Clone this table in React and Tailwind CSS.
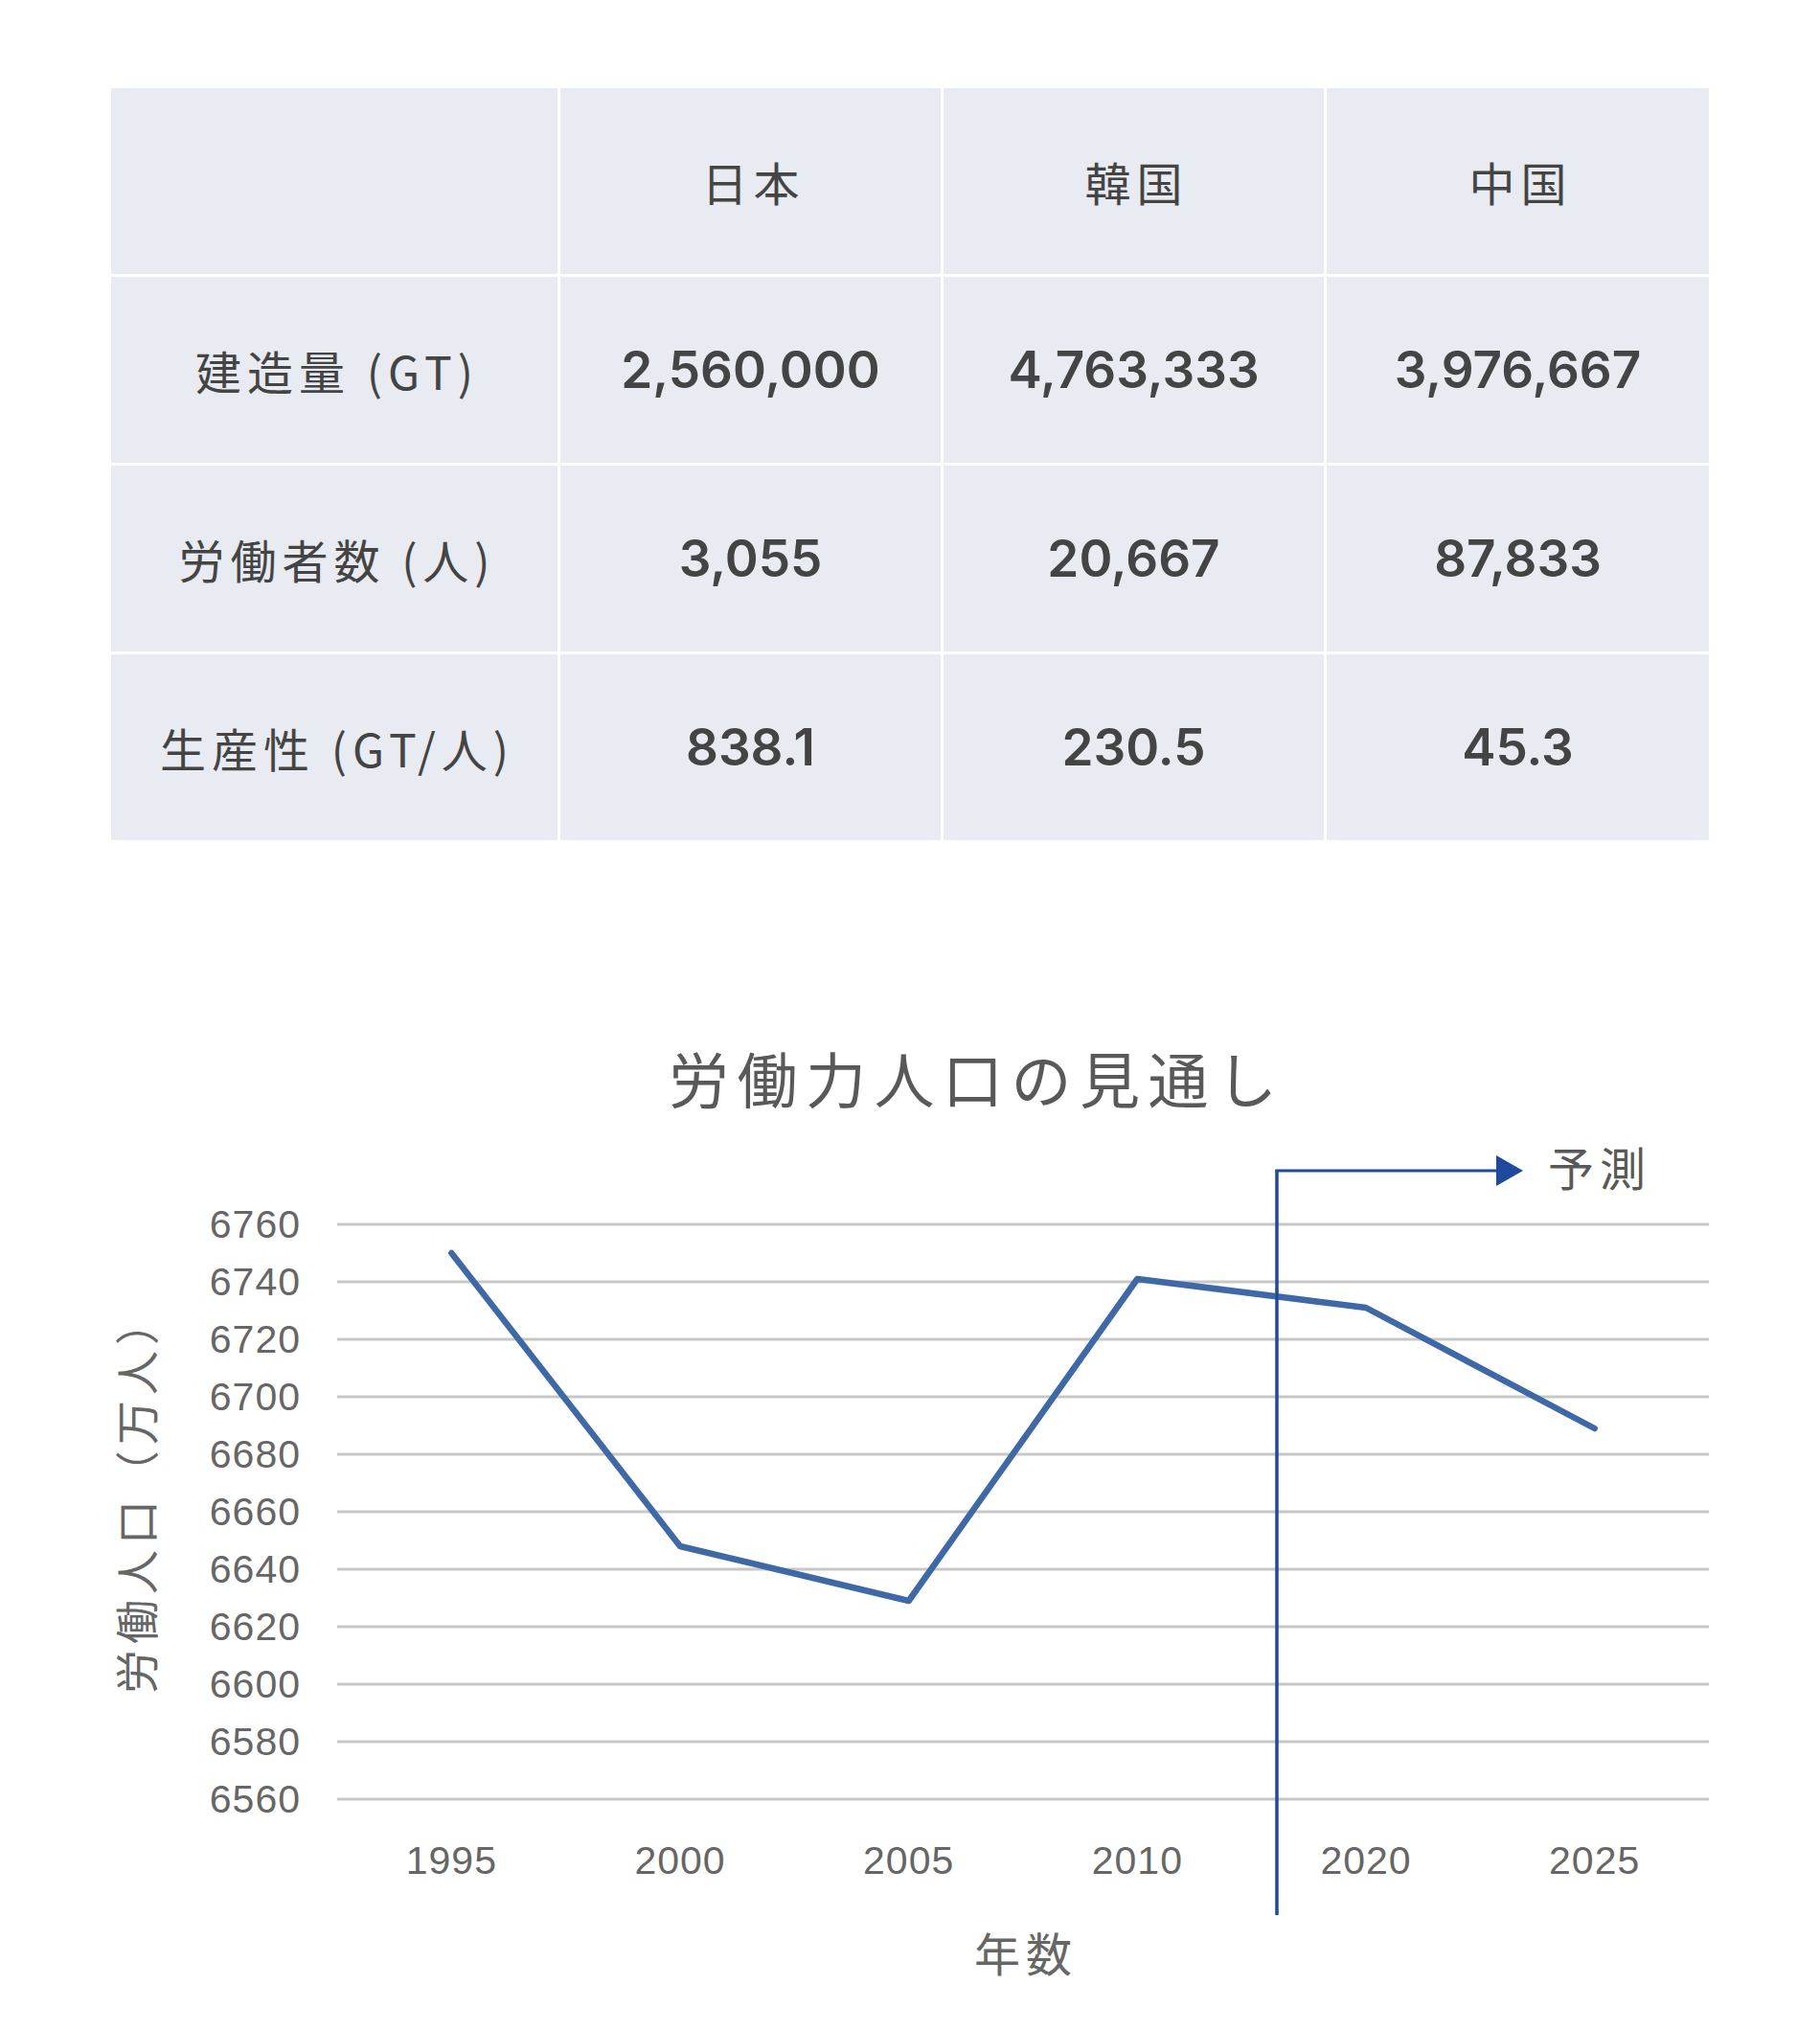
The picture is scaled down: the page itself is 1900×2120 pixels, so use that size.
import React from 'react';

const COLS = ['日本', '韓国', '中国'];

const ROWS = [
  ['建造量 (GT)', ['2,560,000', '4,763,333', '3,976,667']],
  ['労働者数 (人)', ['3,055', '20,667', '87,833']],
  ['生産性 (GT/人)', ['838.1', '230.5', '45.3']],
];

const YEARS = ['1995', '2000', '2005', '2010', '2020', '2025'];
const VALUES = [6750, 6648, 6629, 6741, 6731, 6689];
const TICKS = [6760, 6740, 6720, 6700, 6680, 6660, 6640, 6620, 6600, 6580, 6560];

// plot geometry (svg spans the page width, top of svg = page y 1180)
const X0 = 352;
const X1 = 1784;
const STEP = (X1 - X0) / YEARS.length;
const yOf = (v) => 97 + (6760 - v) * 3;
const xOf = (i) => X0 + STEP * (i + 0.5);

const cell = 'flex h-[194px] items-center justify-center bg-[#e8ebf2]';
const jp = "font-['Noto_Sans_CJK_JP',sans-serif]";

const Chart = () => {
  const points = VALUES.map((v, i) => `${xOf(i)},${yOf(v)}`).join(' ');
  return (
    <svg width="1900" height="822" viewBox="0 0 1900 822" className="block">
      {TICKS.map((t, i) => (
        <g key={t}>
          <line x1={X0} x2={X1} y1={97 + i * 60} y2={97 + i * 60} stroke="#c8c8c8" strokeWidth="3" />
          <text
            x="314"
            y={97 + i * 60}
            textAnchor="end"
            dominantBaseline="central"
            fill="#666"
            fontSize="41"
            letterSpacing="1"
            fontFamily="'Liberation Sans', Arial, sans-serif"
          >
            {t}
          </text>
        </g>
      ))}
      {YEARS.map((y, i) => (
        <text
          key={y}
          x={xOf(i)}
          y="775"
          textAnchor="middle"
          fill="#666"
          fontSize="41"
          letterSpacing="1"
          fontFamily="'Liberation Sans', Arial, sans-serif"
        >
          {y}
        </text>
      ))}

      <polyline points={points} fill="none" stroke="#3e69a6" strokeWidth="6.5" strokeLinejoin="round" strokeLinecap="round" />

      {/* forecast marker */}
      <line x1="1333" x2="1333" y1="40" y2="818" stroke="#1f4a9c" strokeWidth="3.5" />
      <line x1="1331.5" x2="1564" y1="41" y2="41" stroke="#1f4a9c" strokeWidth="3" />
      <polygon points="1562,25 1590,41 1562,57" fill="#1f4a9c" />
      <text
        x="1616"
        y="36"
        dominantBaseline="central"
        fill="#595959"
        fontSize="48"
        letterSpacing="6"
        fontFamily="'Noto Sans CJK JP', sans-serif"
      >
        予測
      </text>

      <text
        x="140"
        y="379"
        transform="rotate(-90 140 379)"
        textAnchor="middle"
        dominantBaseline="central"
        fill="#666"
        fontSize="46"
        letterSpacing="6"
        fontFamily="'Noto Sans CJK JP', sans-serif"
      >
        労働人口（万人）
      </text>
    </svg>
  );
};

export default function App() {
  return (
    <div className="min-h-[2120px] w-[1900px] bg-white">
      {/* table */}
      <div className="pl-[116px] pt-[92px]">
        <div className="grid w-[1668px] grid-cols-[466px_397px_397px_399px] gap-[3px] bg-white">
          <div className={cell} />
          {COLS.map((c) => (
            <div key={c} className={cell}>
              <span className={`${jp} pl-[6px] text-[48px] leading-none tracking-[6px] text-[#444]`}>{c}</span>
            </div>
          ))}
          {ROWS.map(([label, vals]) => (
            <React.Fragment key={label}>
              <div className={cell}>
                <span className={`${jp} pl-[6px] text-[48px] leading-none tracking-[6px] text-[#444]`}>{label}</span>
              </div>
              {vals.map((v) => (
                <div key={v} className={cell}>
                  <span className="font-['Inter',sans-serif] text-[53px] font-semibold leading-none text-[#444]">{v}</span>
                </div>
              ))}
            </React.Fragment>
          ))}
        </div>
      </div>

      {/* chart */}
      <div className="mt-[215px]">
        <h2 className={`${jp} ml-[698px] text-[63px] font-normal leading-none tracking-[8.5px] text-[#595959]`}>
          労働力人口の見通し
        </h2>
        <div className="mt-[26px]">
          <Chart />
        </div>
        <p className={`${jp} ml-[1017px] mt-[10px] text-[48px] leading-none tracking-[6px] text-[#666]`}>年数</p>
      </div>
    </div>
  );
}
